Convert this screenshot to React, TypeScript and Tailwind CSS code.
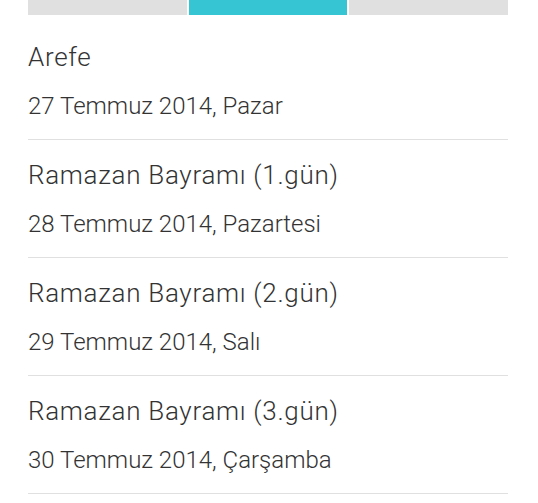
const holidays = [
  { name: 'Arefe', date: '27 Temmuz 2014, Pazar' },
  { name: 'Ramazan Bayramı (1.gün)', date: '28 Temmuz 2014, Pazartesi' },
  { name: 'Ramazan Bayramı (2.gün)', date: '29 Temmuz 2014, Salı' },
  { name: 'Ramazan Bayramı (3.gün)', date: '30 Temmuz 2014, Çarşamba' },
];

export default function App() {
  return (
    <div className="min-h-screen bg-white font-['Roboto',sans-serif] text-[#333333]">
      <div className="ml-[28px] w-[480px]">
        <div className="flex gap-[2px]">
          <div className="h-[15px] flex-1 bg-[#e0e0e0]" />
          <div className="h-[15px] flex-1 bg-[#36c6d3]" />
          <div className="h-[15px] flex-1 bg-[#e0e0e0]" />
        </div>

        <ul className="mt-[7px]">
          {holidays.map((h) => (
            <li key={h.date} className="flex flex-col gap-[20px] border-b border-[#e0e0e0] pt-[20px] pb-[19px]">
              <span className="text-[26px] leading-[30px] font-light tracking-[0.7px]">{h.name}</span>
              <span className="text-[24px] leading-[28px] font-light">{h.date}</span>
            </li>
          ))}
        </ul>
      </div>
    </div>
  );
}
